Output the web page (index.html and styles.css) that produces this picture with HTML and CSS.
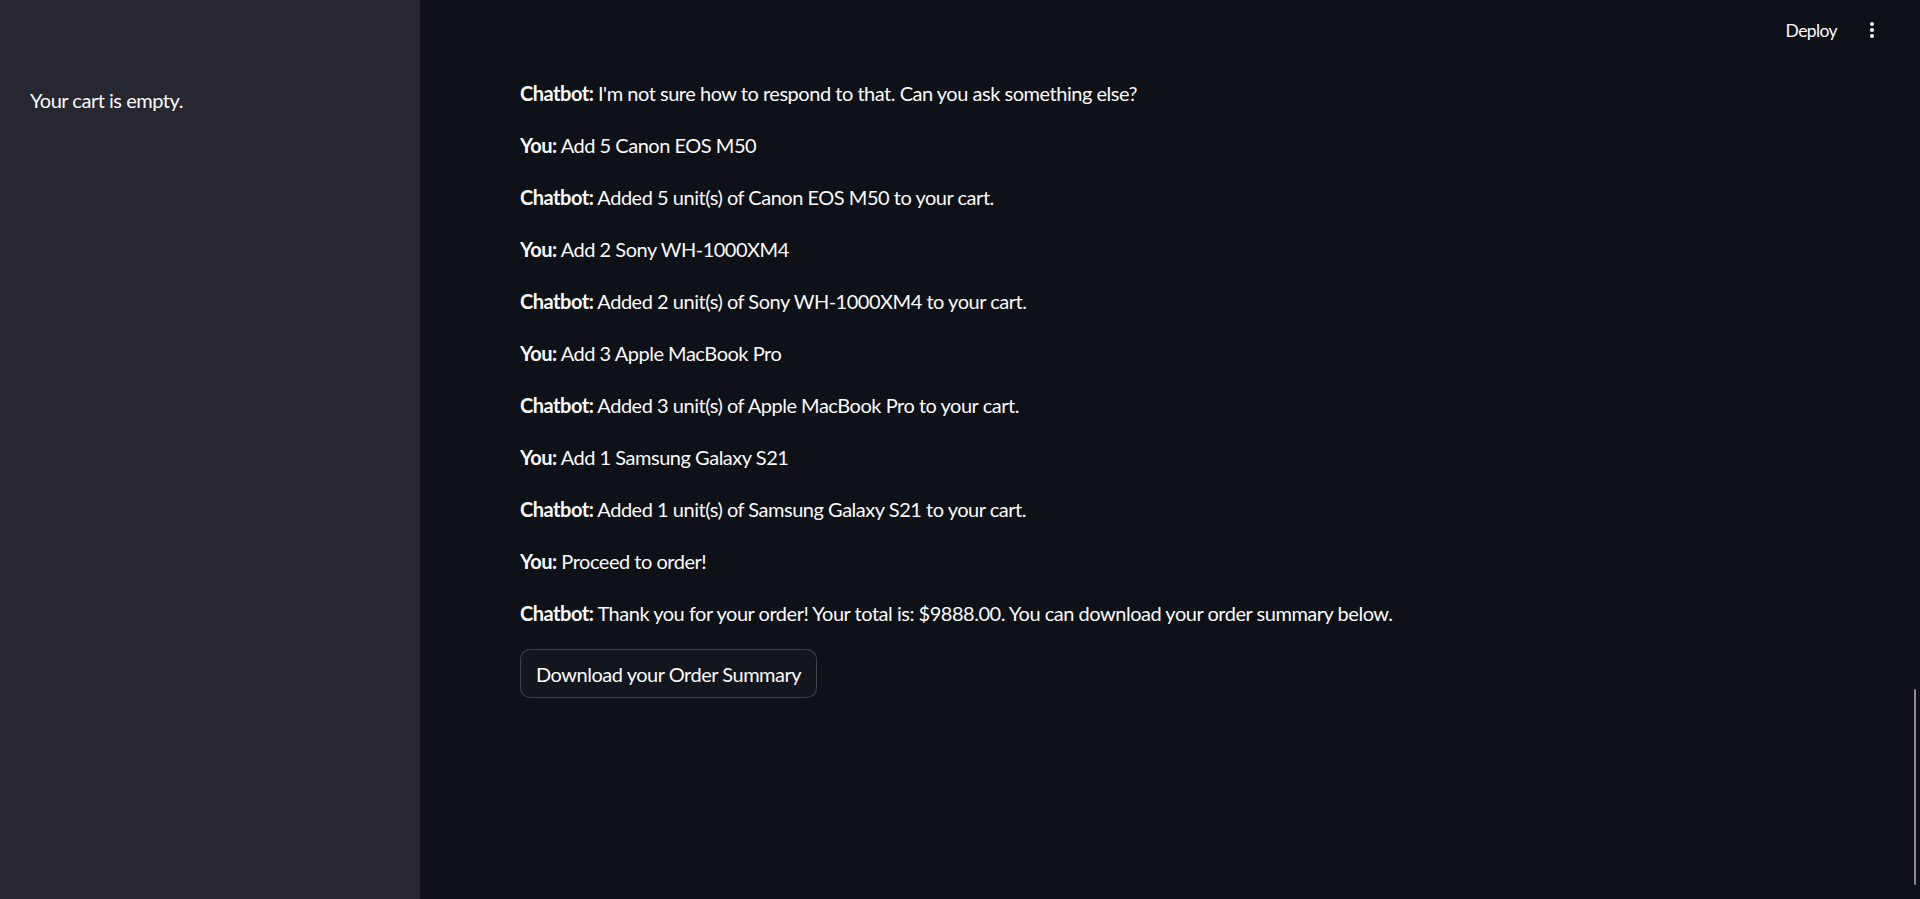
FILE: index.html
```html
<!DOCTYPE html>
<html>
<head>
<meta charset="utf-8">
<link rel="stylesheet" href="styles.css">
</head>
<body>
<div class="app">
  <aside class="sidebar">
    <p class="cart">Your cart is empty.</p>
  </aside>
  <main class="main">
    <header class="header">
      <span class="deploy">Deploy</span>
      <span class="menu" aria-label="menu">
        <svg width="4" height="16" viewBox="0 0 4 16"><circle cx="2" cy="2" r="2" fill="#fafafa"/><circle cx="2" cy="8" r="2" fill="#fafafa"/><circle cx="2" cy="14" r="2" fill="#fafafa"/></svg>
      </span>
    </header>
    <section class="content">
      <p><b>Chatbot:</b> I'm not sure how to respond to that. Can you ask something else?</p>
      <p><b>You:</b> Add 5 Canon EOS M50</p>
      <p><b>Chatbot:</b> Added 5 unit(s) of Canon EOS M50 to your cart.</p>
      <p><b>You:</b> Add 2 Sony WH-1000XM4</p>
      <p><b>Chatbot:</b> Added 2 unit(s) of Sony WH-1000XM4 to your cart.</p>
      <p><b>You:</b> Add 3 Apple MacBook Pro</p>
      <p><b>Chatbot:</b> Added 3 unit(s) of Apple MacBook Pro to your cart.</p>
      <p><b>You:</b> Add 1 Samsung Galaxy S21</p>
      <p><b>Chatbot:</b> Added 1 unit(s) of Samsung Galaxy S21 to your cart.</p>
      <p><b>You:</b> Proceed to order!</p>
      <p><b>Chatbot:</b> Thank you for your order! Your total is: $9888.00. You can download your order summary below.</p>
      <div><button class="btn">Download your Order Summary</button></div>
    </section>
    <div class="scrollbar"></div>
  </main>
</div>
</body>
</html>
```

FILE: styles.css
```css
html, body {
  margin: 0;
  padding: 0;
  height: 100%;
  overflow: hidden;
}
body {
  font-family: Lato, "Source Sans Pro", "Liberation Sans", sans-serif;
  color: #fafafa;
  background: #0e1117;
  letter-spacing: -0.48px;
}
.app {
  display: flex;
  height: 899px;
}
.sidebar {
  width: 420px;
  flex: none;
  background: #262730;
  box-sizing: border-box;
  padding: 84px 30px 0;
}
.cart {
  margin: 0;
  font-size: 20px;
  line-height: 32px;
}
.main {
  flex: 1;
  position: relative;
  background: #0e1117;
}
.header {
  height: 60px;
  display: flex;
  align-items: center;
  justify-content: flex-end;
  padding-right: 46px;
  gap: 33px;
}
.deploy {
  font-size: 17.5px;
  line-height: 24px;
  margin-top: 2px;
  letter-spacing: -0.6px;
}
.menu {
  display: flex;
  align-items: center;
}
.content {
  padding: 17px 100px 0;
  display: flex;
  flex-direction: column;
  gap: 20px;
}
.content p {
  margin: 0;
  font-size: 20px;
  line-height: 32px;
}
.content b {
  font-weight: 700;
}
.btn {
  height: 49px;
  padding: 0 15px;
  font-family: inherit;
  letter-spacing: inherit;
  font-size: 20px;
  color: #fafafa;
  background: #13161e;
  border: 1px solid rgba(250, 250, 250, 0.2);
  border-radius: 10px;
}
.scrollbar {
  position: absolute;
  right: 4px;
  top: 689px;
  width: 2px;
  height: 196px;
  background: #8c8c8c;
  border-radius: 1px;
}
```
